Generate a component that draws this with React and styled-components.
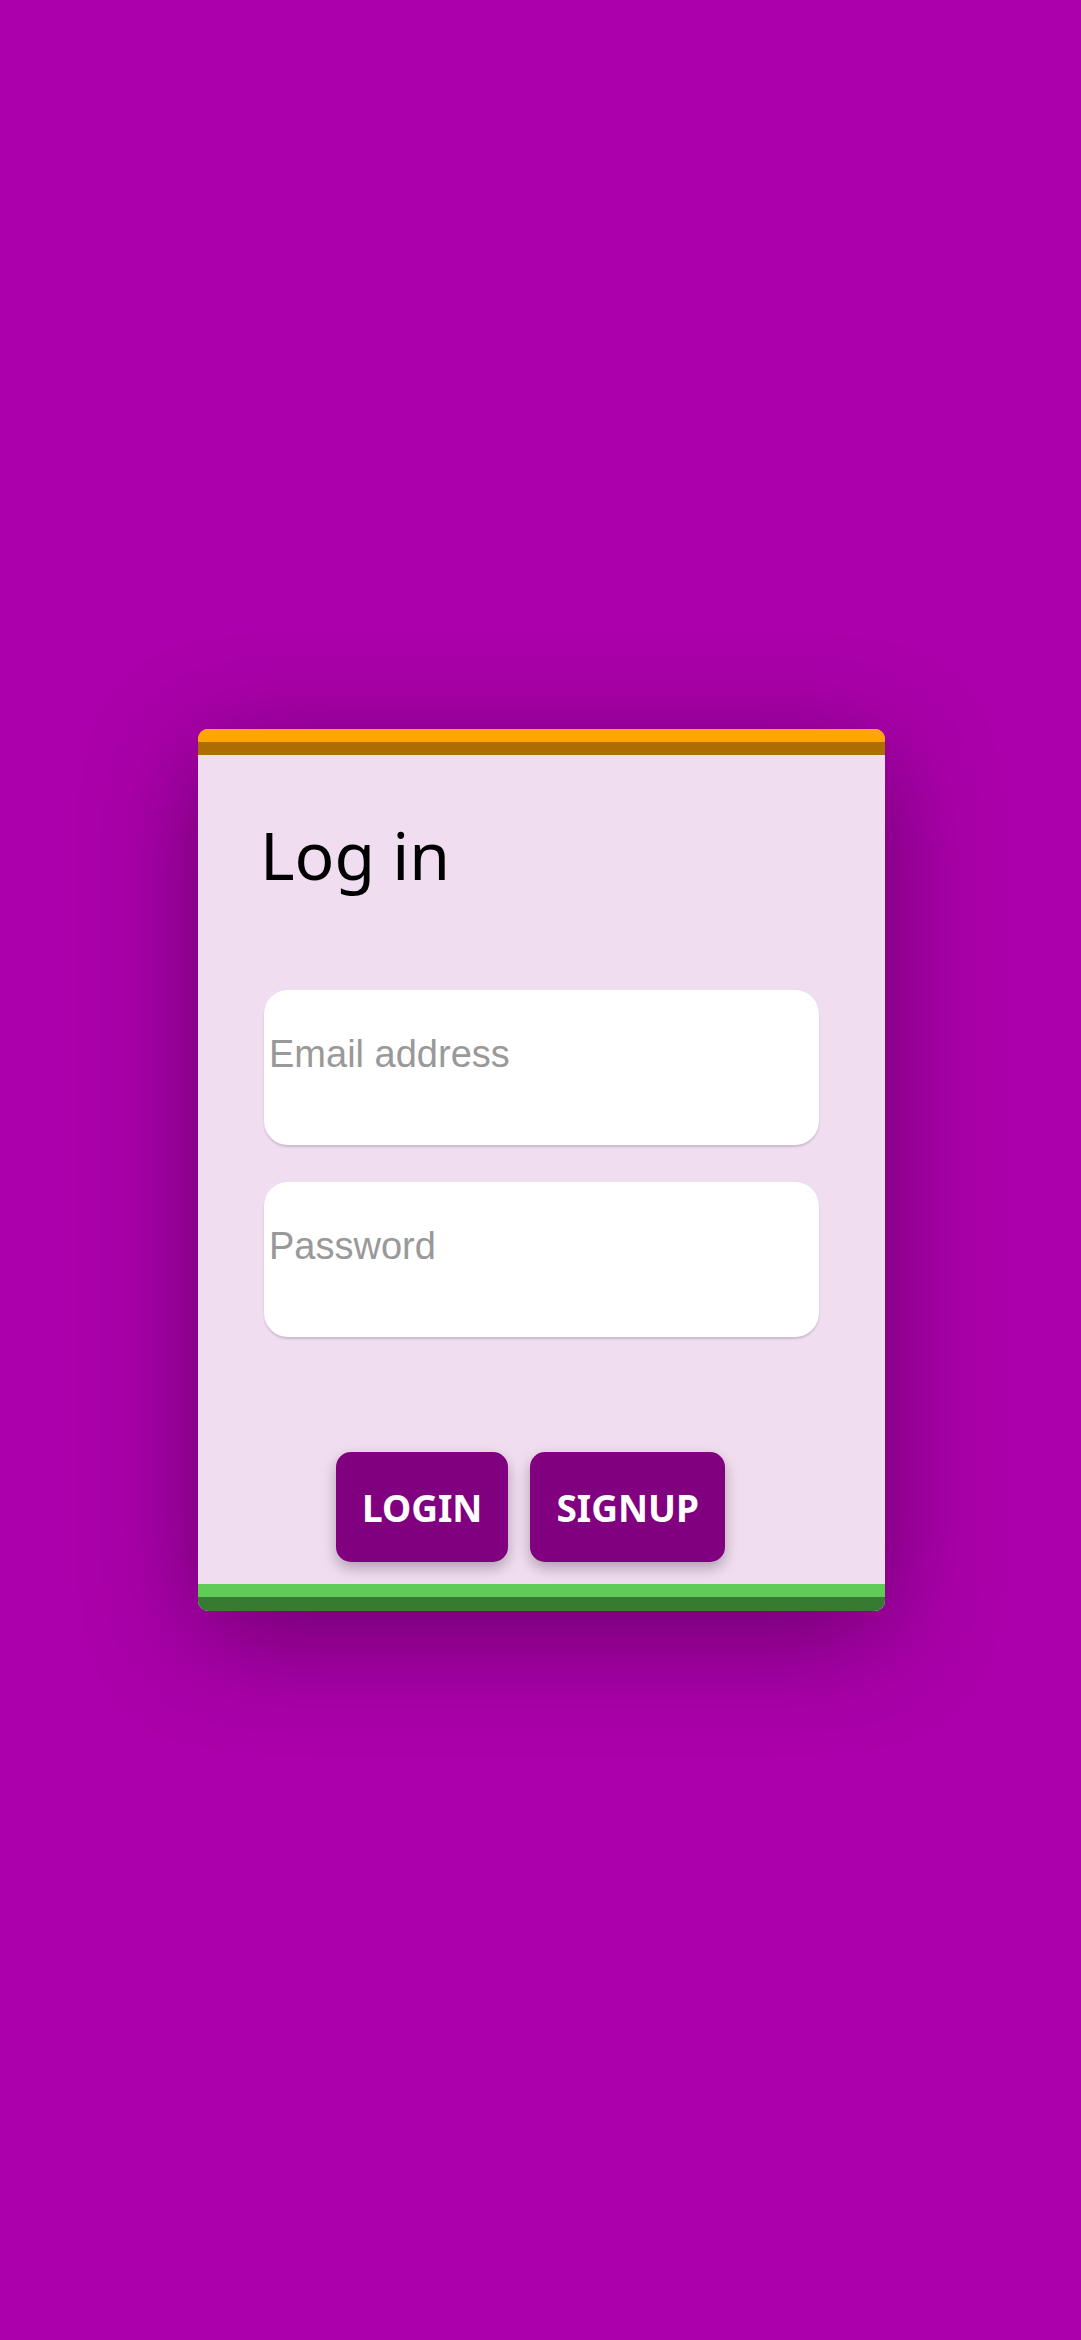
import React from 'react';
import styled, { createGlobalStyle } from 'styled-components';

const GlobalStyle = createGlobalStyle`
  html, body {
    margin: 0;
    padding: 0;
    background: #ab00ab;
  }
  * {
    box-sizing: border-box;
  }
`

const Page = styled.div`
  display: flex;
  align-items: center;
  justify-content: center;
  min-height: 2340px;
  width: 100%;
  padding-left: 2px;
`

const Card = styled.div`
  display: flex;
  flex-direction: column;
  width: 687px;
  background-color: #f0ddf0;
  border-radius: 10px;
  overflow: hidden;
  box-shadow: 0 24px 110px rgba(0, 0, 0, 0.38);
`

const Stripe = styled.div`
  height: ${props => props.h || 13}px;
  background-color: ${props => props.color};
`

const Body = styled.div`
  display: flex;
  flex-direction: column;
  padding: 54px 66px 22px 66px;
`

const Title = styled.h1`
  margin: 0 0 0 -4px;
  font-family: "Noto Sans", sans-serif;
  font-weight: 400;
  font-size: 66px;
  line-height: 90px;
  height: 90px;
  color: #000;
`

const Input = styled.input`
  display: block;
  width: 100%;
  height: 155px;
  margin-top: ${props => props.top}px;
  padding: 42px 5px 69px 5px;
  border: none;
  outline: none;
  border-radius: 24px;
  background: #fff;
  box-shadow: 0 2px 2px rgba(0, 0, 0, 0.15);
  font-family: "Liberation Sans", Arial, sans-serif;
  font-size: 38px;
  color: #333;
  &::placeholder {
    color: #999;
  }
`

const Buttons = styled.div`
  display: flex;
  justify-content: center;
  margin-top: 115px;
`

const Button = styled.button`
  height: 110px;
  padding: 0 26px;
  margin-right: 22px;
  border: none;
  border-radius: 15px;
  background-color: #800080;
  color: #fff;
  font-family: "Noto Sans", sans-serif;
  font-weight: 700;
  font-size: 37px;
  box-shadow: 0 6px 14px rgba(0, 0, 0, 0.28);
  cursor: pointer;
`

const App = () => {
  return (
    <Page>
      <GlobalStyle />
      <Card>
        <Stripe color="#ffa500" />
        <Stripe color="#ad6e00" />
        <Body>
          <Title>Log in</Title>
          <Input type="email" placeholder="Email address" top={91} />
          <Input type="password" placeholder="Password" top={37} />
          <Buttons>
            <Button>LOGIN</Button>
            <Button>SIGNUP</Button>
          </Buttons>
        </Body>
        <Stripe color="#5ecc55" />
        <Stripe color="#377a32" h={14} />
      </Card>
    </Page>
  )
}

export default App;
